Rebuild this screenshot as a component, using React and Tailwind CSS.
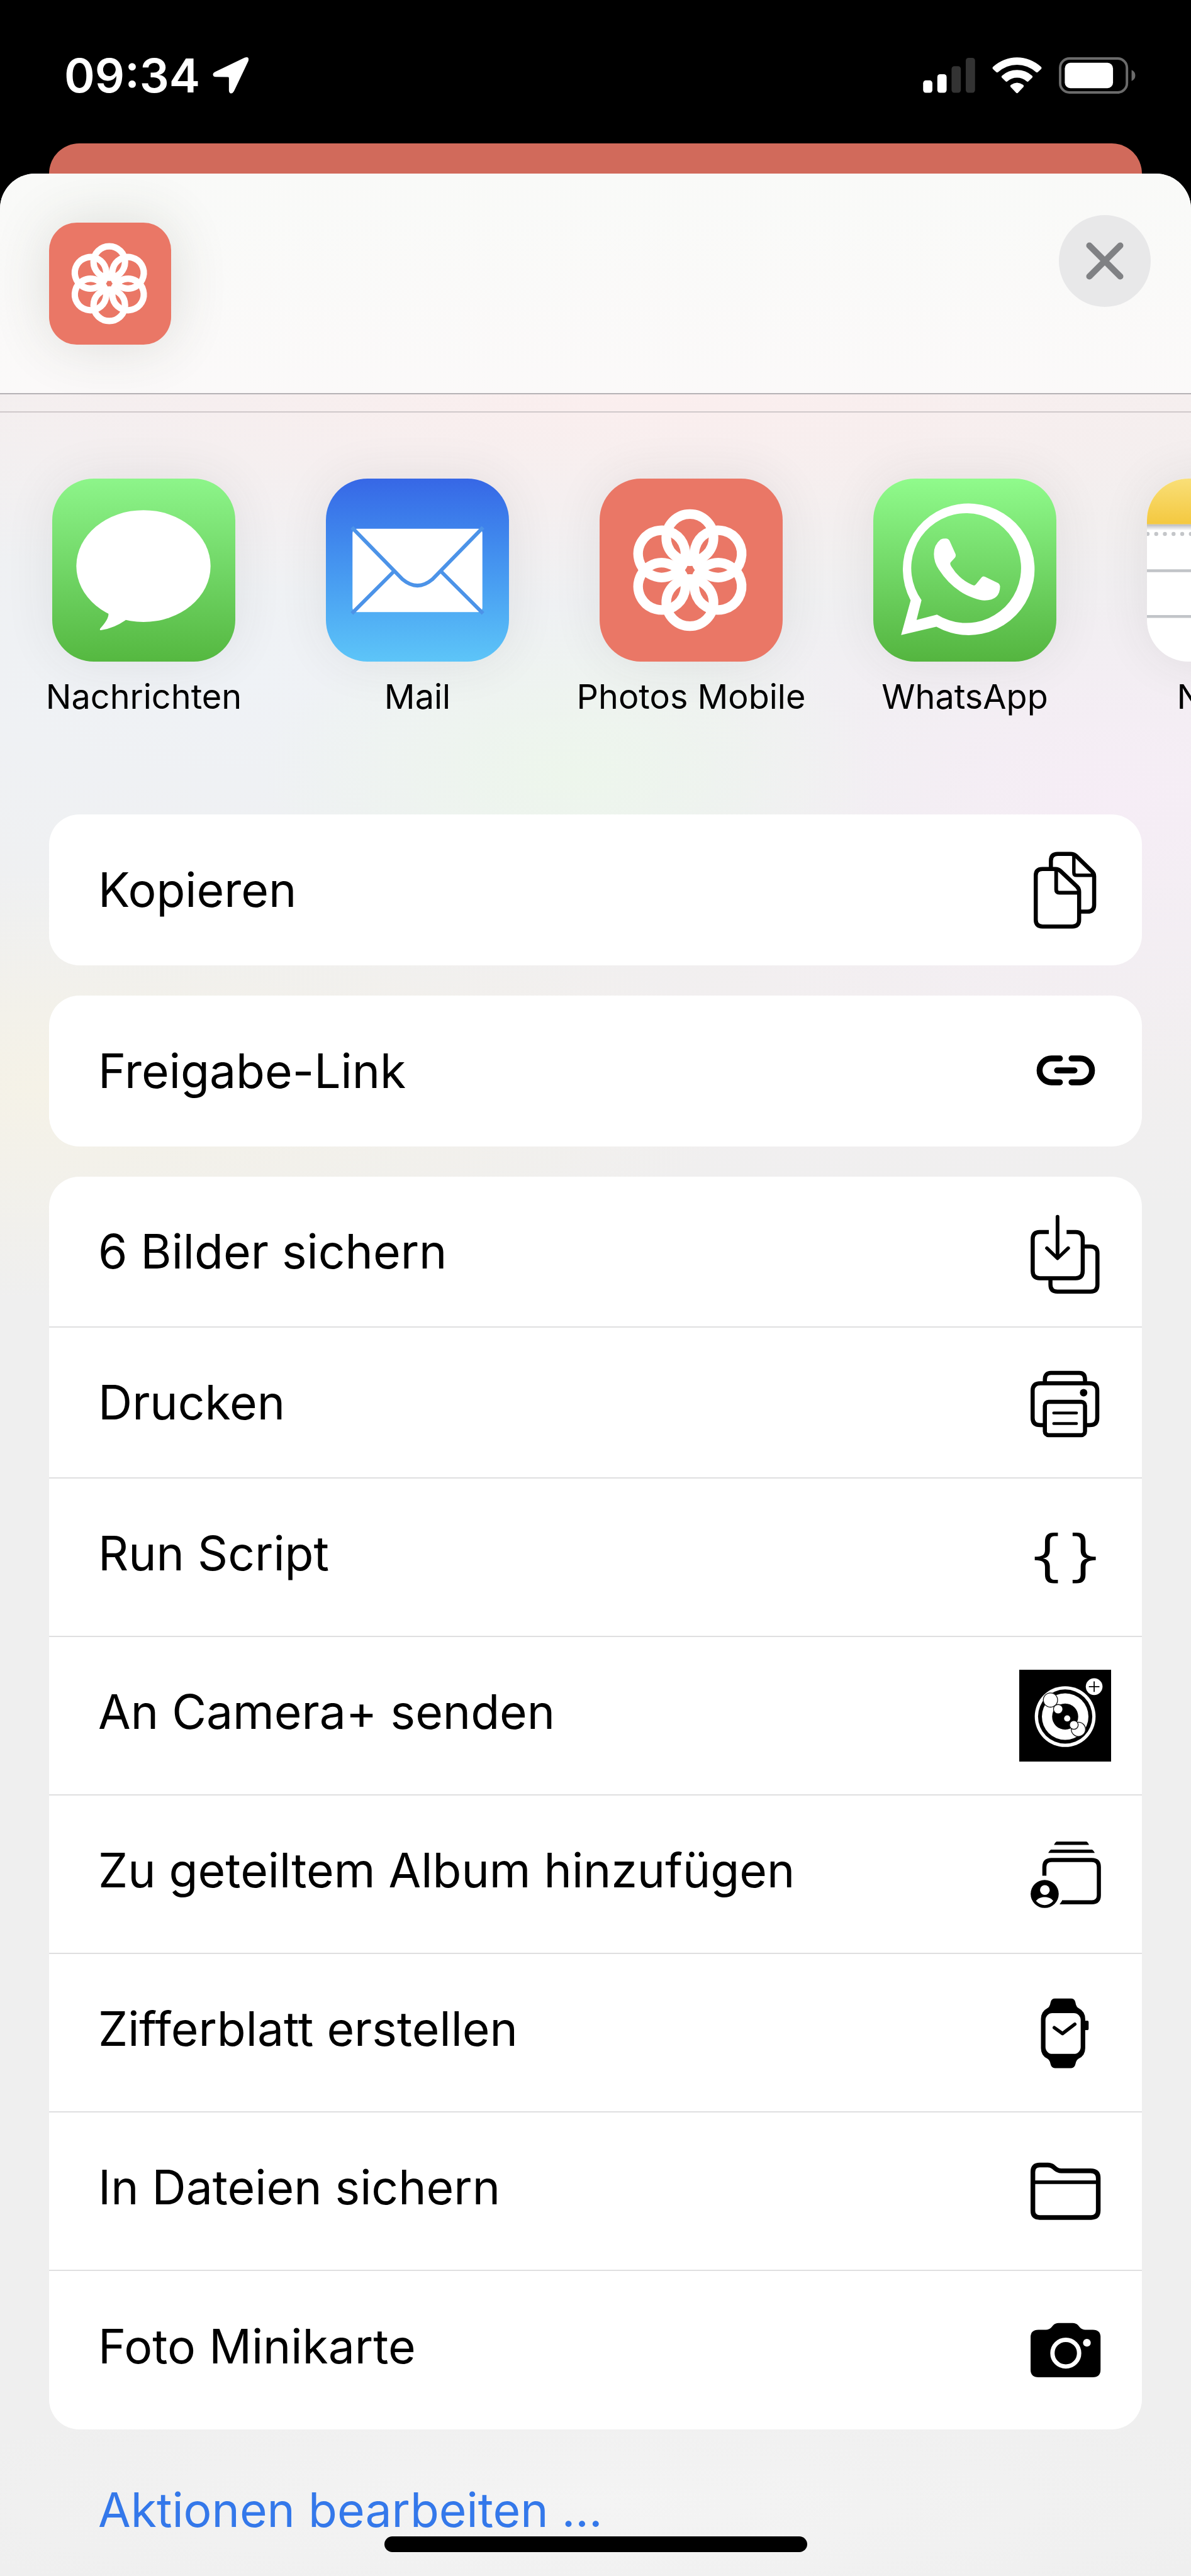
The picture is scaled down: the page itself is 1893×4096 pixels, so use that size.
import React from "react";

const ROW_ICON = "h-[146px] w-[146px] shrink-0";

function RowIcon({ children, ...rest }) {
  return (
    <svg
      viewBox="0 0 148 148"
      className={ROW_ICON}
      fill="none"
      stroke="#000"
      strokeWidth="6.6"
      aria-hidden="true"
      {...rest}
    >
      {children}
    </svg>
  );
}

const CopyIcon = () => (
  <RowIcon strokeLinejoin="round">
    <path d="M51 38V27Q51 16 62 16H83Q88 16 91.500 19.200L117 44Q120.700 47.500 120.700 52V98Q120.700 109 110 109H98" />
    <path d="M88 17V46Q88 50.500 92.500 50.500H120" strokeWidth="5.500" />
    <path d="M37.500 40.400H58Q63 40.400 66.500 43.600L93 68.500Q96.500 72 96.500 77V122Q96.500 133 85.500 133H37.500Q26.600 133 26.600 122V51Q26.600 40.400 37.500 40.400Z" />
    <path d="M59.500 41V73.500Q59.500 78.500 64.500 78.500H96" strokeWidth="6" />
  </RowIcon>
);

const LinkIcon = () => (
  <RowIcon strokeWidth="9.6" strokeLinecap="round">
    <path d="M65.500 53.800H52A19.200 19.200 0 0 0 52 92.200H65.500" />
    <path d="M84.300 53.800H98A19.200 19.200 0 0 1 98 92.200H84.300" />
    <path d="M61 73H89" />
  </RowIcon>
);

const SaveImagesIcon = () => (
  <RowIcon>
    <path d="M47.700 42.500H33Q21.700 42.500 21.700 54V105.500Q21.700 117 33 117H91Q102.300 117 102.300 105.500V54Q102.300 42.500 91 42.500H76.300" />
    <path d="M102.300 66H115Q126 66 126 77V127.500Q126 138.600 115 138.600H61.500Q50.300 138.600 50.300 127.500V118" />
    <path d="M61.700 18V84" strokeLinecap="round" strokeWidth="6" />
    <path d="M44.500 68.500L61.700 85L79 68.500" strokeLinecap="round" strokeLinejoin="round" strokeWidth="5.500" />
  </RowIcon>
);

const PrintIcon = () => (
  <RowIcon>
    <path d="M41.300 43V37Q41.300 26.400 51 26.400H96.500Q106 26.400 106 37V43" />
    <path d="M41.300 110.500H34Q21.600 110.500 21.600 99V55Q21.600 43 34 43H113.500Q125.700 43 125.700 55V99Q125.700 110.500 113.500 110.500H106" />
    <rect x="41.300" y="73" width="64.700" height="53.700" rx="6" />
    <path d="M55.500 91H92.300M55.500 108H92.300" strokeWidth="4.600" strokeLinecap="round" />
    <circle cx="103.700" cy="58.300" r="6" fill="#000" stroke="none" />
  </RowIcon>
);

const BRACE =
  "M62.300 34.400H56C46 34.400 41.500 39 41.500 49V62C41.500 70 38 73 25 73.300V78.700C38 79 41.500 82 41.500 90V101.500C41.500 111.500 46 116 56 116H62.300V110.500H58C52 110.500 49.300 108 49.300 101.500V89C49.300 81 45 77 38 76C45 75 49.300 71 49.300 63V49C49.300 42.500 52 40 58 40H62.300Z";

const BracesIcon = () => (
  <RowIcon fill="#000" stroke="none">
    <path d={BRACE} />
    <path d={BRACE} transform="matrix(-1 0 0 1 148.300 0)" />
  </RowIcon>
);

const CameraPlusIcon = () => (
  <RowIcon fill="#fff" stroke="none">
    <rect width="148" height="148" fill="#000" />
    <circle cx="74" cy="75.500" r="49" />
    <circle cx="74" cy="75.500" r="43.700" fill="#000" />
    <circle cx="74" cy="75.500" r="37.500" />
    <circle cx="74" cy="75.500" r="21" fill="#000" />
    <circle cx="77.300" cy="78.500" r="5" />
    <g stroke="#111" strokeWidth="1.300">
      <circle cx="50.300" cy="48.800" r="11.500" />
      <circle cx="62.700" cy="63.500" r="7.500" />
      <circle cx="95.300" cy="96" r="11.500" />
      <circle cx="88" cy="89" r="7" />
    </g>
    <circle cx="120.700" cy="27.200" r="13.500" />
    <path d="M112.200 27.200H129.200M120.700 18.700V35.700" stroke="#000" strokeWidth="1.800" />
  </RowIcon>
);

const SharedAlbumIcon = () => (
  <RowIcon>
    <path d="M60 21.600H108.500Q111 23 112.500 26.800H56Q57.500 23 60 21.600Z" fill="#000" stroke="none" />
    <path d="M51 34.400H117.500Q120 36 121.700 39.700H46.700Q48.500 36 51 34.400Z" fill="#000" stroke="none" />
    <path d="M40.500 76.600V62.500Q40.500 51.200 52 51.200H117Q128.300 51.200 128.300 62.500V108Q128.300 119.300 117 119.300H69" />
    <path d="M69.500 116V122.600H65Z" fill="#000" stroke="none" />
    <circle cx="41" cy="106" r="22.600" fill="#000" stroke="none" />
    <circle cx="41.300" cy="99.600" r="7.800" fill="#fff" stroke="none" />
    <path d="M27 117C31 112.500 36 111 41 111S51 112.500 54.800 117C51 121.500 46 123.800 41 123.800S31 121.500 27 117Z" fill="#fff" stroke="none" />
  </RowIcon>
);

const WatchIcon = () => (
  <RowIcon>
    <path
      d="M57.500 19H83.500Q89 19 90.500 25Q91.500 32 95.500 34.500Q106.300 40 106.300 52V99Q106.300 111 95.500 116Q91.500 118.500 90.500 125Q89 131.200 83.500 131.200H57.500Q52 131.200 50.500 125Q49.500 118.500 45.500 116Q35 111 35 99V52Q35 40 45.500 34.500Q49.500 32 50.500 25Q52 19 57.500 19Z"
      fill="#000"
      stroke="none"
    />
    <rect x="42.300" y="42.600" width="56.700" height="65.700" rx="11" fill="#fff" stroke="none" />
    <rect x="104" y="54.700" width="7.800" height="15.300" rx="2" fill="#000" stroke="none" />
    <path d="M56.500 66L69.700 75.500L89.500 60.500" strokeWidth="5.500" strokeLinecap="round" strokeLinejoin="round" />
  </RowIcon>
);

const FolderIcon = () => (
  <RowIcon strokeWidth="7.5">
    <path d="M22 106V43Q22 32 33 32H46Q51 32 55 35L58.500 38Q62.500 41.300 67.500 41.300H115Q127.300 41.300 127.300 53V105Q127.300 116.500 116 116.500H33Q22 116.500 22 106Z" />
    <path d="M24 59.700H126" strokeWidth="6" />
  </RowIcon>
);

const CameraIcon = () => (
  <RowIcon fill="#000" stroke="none">
    <path d="M31 41H43Q48 41 51.500 37.500L54.500 34Q58 30.200 63.500 30.200H86Q91.500 30.200 95 34L98 37.500Q101.500 41 106.500 41H118.500Q131 41 131 53V105.500Q131 117.600 118.500 117.600H31Q18.300 117.600 18.300 105.500V53Q18.300 41 31 41Z" />
    <circle cx="75" cy="78.700" r="21.500" fill="#000" stroke="#fff" strokeWidth="7" />
    <circle cx="109" cy="62" r="6.200" fill="#fff" />
  </RowIcon>
);

const PETALS = [0, 60, 120, 180, 240, 300];

function Flower() {
  return (
    <svg viewBox="2 0 296 296" className="h-full w-full" aria-hidden="true">
      <g fill="none" stroke="#fff" strokeWidth="15.500">
        {PETALS.map((a) => (
          <circle key={a} cx="148" cy="95.500" r="38.200" transform={`rotate(${a} 148 148)`} />
        ))}
      </g>
    </svg>
  );
}

const MessagesArt = () => (
  <svg viewBox="0 0 296 296" className="h-full w-full" fill="#fff" aria-hidden="true">
    <ellipse cx="147.500" cy="141.500" rx="108.500" ry="90.500" />
    <path d="M84 208Q91 214 91 219Q91 228 77.500 242.500Q76 246 80 245Q100 242 118 229.500L130 215Z" />
  </svg>
);

const MailArt = () => (
  <svg viewBox="0 0 296 296" className="h-full w-full" fill="none" aria-hidden="true">
    <rect x="43" y="81" width="210" height="135" rx="7" fill="#fff" />
    <g stroke="#4c93e8" strokeWidth="6">
      <path d="M42 79L124 163Q148 183 172 163L254 79" />
      <path d="M111 149L42 218M185 149L254 218" />
    </g>
  </svg>
);

const WhatsAppArt = () => (
  <svg viewBox="0 0 296 296" className="h-full w-full" fill="#fff" aria-hidden="true">
    <path
      fillRule="evenodd"
      d="M45 253L60.400 197A106.500 106.500 0 1 1 102 239.500ZM70 228.700L103 220A88.800 88.800 0 1 0 78 196.500Z"
    />
    <path d="M109 98.500Q112 97 117 97Q122 97 124 102L133 122Q134 125 132 128L125 135.500Q123.500 138 126 142Q139 163 160 172Q164 174 166 171L175 160Q177 157 181 159L202 169Q205 171 205 174Q205 197 180 197Q173 197 162 193Q128 181 106 147Q98 135 98 122Q98 107 109 98.500Z" />
  </svg>
);

const NotesArt = () => (
  <svg viewBox="0 0 296 296" className="h-full w-full" aria-hidden="true">
    <defs>
      <linearGradient id="notesTop" x1="0" y1="0" x2="0" y2="1">
        <stop offset="0" stopColor="#f9df78" />
        <stop offset="1" stopColor="#f4c83f" />
      </linearGradient>
      <linearGradient id="notesShade" x1="0" y1="0" x2="0" y2="1">
        <stop offset="0" stopColor="#b9babd" />
        <stop offset="1" stopColor="#fff" />
      </linearGradient>
    </defs>
    <rect width="296" height="74" fill="url(#notesTop)" />
    <rect y="74" width="296" height="10" fill="url(#notesShade)" />
    <path d="M1 89.500H296" stroke="#c4c6c9" strokeWidth="6.500" strokeLinecap="round" strokeDasharray="0 14" />
    <path d="M0 149H296M0 223H296" stroke="#c1c4c8" strokeWidth="4.500" />
  </svg>
);

const APPS = [
  { name: "Nachrichten", art: <MessagesArt />, bg: "bg-linear-to-b from-[#8df58a] to-[#55b840]" },
  { name: "Mail", art: <MailArt />, bg: "bg-linear-to-b from-[#3767e6] to-[#5dc5f8]" },
  { name: "Photos Mobile", art: <Flower />, bg: "bg-[#ea7766]" },
  { name: "WhatsApp", art: <WhatsAppArt />, bg: "bg-linear-to-b from-[#90fb8c] to-[#54b53f]" },
  { name: "Notizen", art: <NotesArt />, bg: "bg-white" },
];

const GROUPS = [
  [{ label: "Kopieren", icon: <CopyIcon /> }],
  [{ label: "Freigabe-Link", icon: <LinkIcon /> }],
  [
    { label: "6 Bilder sichern", icon: <SaveImagesIcon /> },
    { label: "Drucken", icon: <PrintIcon /> },
    { label: "Run Script", icon: <BracesIcon />, tall: true },
    { label: "An Camera+ senden", icon: <CameraPlusIcon />, tall: true },
    { label: "Zu geteiltem Album hinzufügen", icon: <SharedAlbumIcon />, tall: true },
    { label: "Zifferblatt erstellen", icon: <WatchIcon />, tall: true },
    { label: "In Dateien sichern", icon: <FolderIcon />, tall: true },
    { label: "Foto Minikarte", icon: <CameraIcon />, tall: true },
  ],
];

function StatusBar() {
  return (
    <div className="flex h-[228px] items-start justify-between pt-20 pr-[88px] pl-[102px] text-white">
      <div className="flex h-20 items-center gap-5">
        <time className="text-[74px] leading-20 font-semibold">09:34</time>
        <svg viewBox="0 0 58 59" className="h-[58px] w-[58px]" fill="#fff" aria-hidden="true">
          <path d="M51 .8Q59-2 57.200 6L34 55Q31 60 27.500 58Q25.800 57 25.800 54V33.500Q25.800 32 24 32L4.500 31.800Q0 31.500 0 28Q0 25.500 4 23.500Z" />
        </svg>
      </div>
      <div className="flex h-20 items-center gap-[27px]">
        <svg viewBox="0 0 84 57" className="h-14 w-[83px]" aria-label="Signal">
          <rect x="0" y="36.500" width="15" height="20" rx="4.500" fill="#fff" />
          <rect x="23" y="26.500" width="15" height="30" rx="4.500" fill="#fff" />
          <rect x="46" y="13.500" width="15" height="43" rx="4.500" fill="#333" />
          <rect x="69" y="0" width="15" height="56.500" rx="4.500" fill="#333" />
        </svg>
        <svg viewBox="0 0 80 59" className="h-[58px] w-[79px]" fill="#fff" aria-label="WLAN">
          <path d="M1.200 15.500A57 57 0 0 1 78.800 15.500Q80.500 17.200 79 19L73.500 24.200Q72 25.300 70.500 24A45 45 0 0 0 9.500 24Q8 25.300 6.500 24.200L1 19Q-.5 17.200 1.200 15.500Z" />
          <path d="M15.500 30A36.500 36.500 0 0 1 64.500 30Q66 31.500 64.500 33L58.500 39Q57 40.300 55.500 39A23.500 23.500 0 0 0 24.500 39Q23 40.300 21.500 39L15.500 33Q14 31.500 15.500 30Z" />
          <path d="M30 44.800Q40 37.500 50 44.800Q51.800 46.200 50.300 48L41.500 57.500Q40 59 38.500 57.500L29.700 48Q28.200 46.200 30 44.800Z" />
        </svg>
        <svg viewBox="0 0 124 59" className="h-[58px] w-[122px]" aria-label="Batterie">
          <rect x="2" y="2" width="108" height="55" rx="15" fill="none" stroke="#6b6b6b" strokeWidth="4" />
          <rect x="9.500" y="9" width="78" height="41" rx="9" fill="#fff" />
          <path d="M117.500 20.500Q123.500 23 123.500 29.500T117.500 38.500Z" fill="#6b6b6b" />
        </svg>
      </div>
    </div>
  );
}

export default function App() {
  return (
    <div
      lang="de"
      className="relative flex min-h-screen flex-col overflow-hidden bg-black font-['Inter',sans-serif] text-black"
    >
      <StatusBar />
      <div className="mx-[78px] h-12 rounded-t-[48px] bg-[#d16a5b]" />

      <main className="flex grow flex-col overflow-hidden rounded-t-[56px] bg-[#efefef] bg-[radial-gradient(ellipse_90%_9%_at_55%_9%,#fbeeee,transparent),radial-gradient(ellipse_26%_7%_at_48%_25%,#edf6ec,transparent),radial-gradient(ellipse_42%_12%_at_94%_26%,#f6edf6,transparent),radial-gradient(ellipse_70%_14%_at_20%_21%,#eff2f6,transparent),radial-gradient(ellipse_60%_9%_at_4%_38%,#f5f2e7,transparent),radial-gradient(ellipse_60%_8%_at_70%_36%,#f3eff0,transparent),radial-gradient(ellipse_60%_5%_at_50%_97%,#f4f4f4,transparent)]">
        <header className="flex h-[351px] items-start justify-between border-b-2 border-[#b5b2b5] bg-[linear-gradient(to_bottom,#f9faf8,#fbf9f9)] pt-[78px] pr-[64px] pl-[78px]">
          <div className="h-[194px] w-[194px] overflow-hidden rounded-[44px] bg-[#ea7766] shadow-[0_0_90px_rgba(60,70,50,0.16)]">
            <Flower />
          </div>
          <button
            type="button"
            aria-label="Schließen"
            className="-mt-3 flex h-[146px] w-[146px] items-center justify-center rounded-full bg-[#e8e8e9]"
          >
            <svg viewBox="0 0 60 60" className="h-[60px] w-[60px]" aria-hidden="true">
              <path d="M5.500 5.500L54.500 54.500M54.500 5.500L5.500 54.500" stroke="#808184" strokeWidth="10" strokeLinecap="round" />
            </svg>
          </button>
        </header>
        <div className="h-[29px] shrink-0 border-b-2 border-[#cfc8ca]" />

        <nav aria-label="Apps" className="flex gap-[24px] pt-[105px] pl-[23px]">
          {APPS.map((app) => (
            <button key={app.name} type="button" className="flex w-[411px] shrink-0 flex-col items-center">
              <span
                className={`block h-[291px] w-[291px] overflow-hidden rounded-[66px] shadow-[0_0_80px_rgba(60,60,60,0.09)] ${app.bg}`}
              >
                {app.art}
              </span>
              <span className="mt-6 text-[54px] leading-16 whitespace-nowrap">{app.name}</span>
            </button>
          ))}
        </nav>

        <div className="mx-[78px] mt-[155px] flex flex-col gap-12">
          {GROUPS.map((rows, i) => (
            <section key={i} className="divide-y-2 divide-[#dfdfe0] overflow-hidden rounded-[48px] bg-white">
              {rows.map((row) => (
                <button
                  key={row.label}
                  type="button"
                  className={`flex w-full items-center justify-between pr-[49px] pl-[78px] text-left ${
                    row.tall ? "h-[252px]" : "h-[240px]"
                  }`}
                >
                  <span className={`text-[75px] leading-24 whitespace-nowrap ${row.tall ? "pb-3" : ""}`}>{row.label}</span>
                  {row.icon}
                </button>
              ))}
            </section>
          ))}
        </div>

        <a href="#aktionen" className="mx-[156px] mt-[80px] text-[75px] leading-24 text-[#3478ea]">
          Aktionen bearbeiten ...
        </a>
      </main>

      <div className="absolute bottom-[38px] left-1/2 h-[25px] w-[672px] -translate-x-1/2 rounded-full bg-black" />
    </div>
  );
}
